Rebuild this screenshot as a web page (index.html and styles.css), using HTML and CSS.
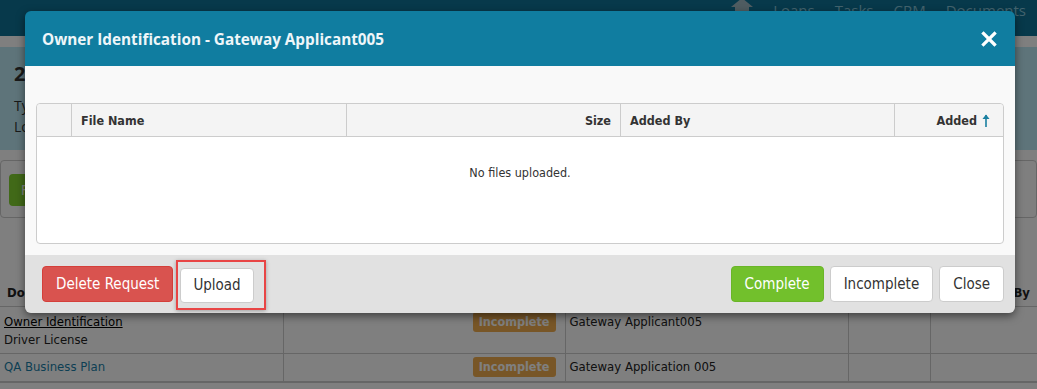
FILE: index.html
```html
<!DOCTYPE html>
<html lang="en">
<head>
    <meta charset="UTF-8">
    <meta name="viewport" content="width=device-width, initial-scale=1.0">
    <title>Owner Identification</title>
    <link rel="stylesheet" href="styles.css">
</head>
<body>

<div class="page">
    <div class="topnav">
        <svg class="home-icon" width="22" height="16" viewBox="0 0 22 16"><path d="M11 0 L22 9 L18 9 L18 16 L4 16 L4 9 L0 9 Z" fill="#9fb8c2"/></svg>
        <span>Loans</span>
        <span>Tasks</span>
        <span>CRM</span>
        <span>Documents</span>
    </div>
    <div class="strip"></div>
    <div class="summary">
        <div class="summary-title">2</div>
        <div class="summary-line">Type</div>
        <div class="summary-line">Loan</div>
    </div>
    <div class="actions-box">
        <button class="btn-green-bg">Request</button>
    </div>

    <table class="docs">
        <colgroup>
            <col style="width: 283px">
            <col style="width: 282px">
            <col style="width: 283px">
            <col style="width: 82px">
            <col>
        </colgroup>
        <thead>
            <tr>
                <th>Document</th>
                <th></th>
                <th></th>
                <th></th>
                <th class="right">Added By</th>
            </tr>
        </thead>
        <tbody>
            <tr class="tall">
                <td><a class="doc-link" href="#">Owner Identification</a><br>Driver License</td>
                <td class="right"><span class="badge">Incomplete</span></td>
                <td>Gateway Applicant005</td>
                <td></td>
                <td></td>
            </tr>
            <tr>
                <td><a class="doc-link blue" href="#">QA Business Plan</a></td>
                <td class="right"><span class="badge">Incomplete</span></td>
                <td>Gateway Application 005</td>
                <td></td>
                <td></td>
            </tr>
        </tbody>
    </table>
</div>

<div class="overlay"></div>

<div class="modal">
    <div class="modal-header">
        <h3>Owner Identification - Gateway Applicant005</h3>
        <svg class="close-x" width="16" height="16" viewBox="0 0 16 16"><path d="M2.5 2.5 L13.5 13.5 M13.5 2.5 L2.5 13.5" stroke="#fff" stroke-width="3.2" stroke-linecap="square"/></svg>
    </div>
    <div class="modal-body">
        <div class="files">
            <div class="files-head">
                <div class="col col-check"></div>
                <div class="col col-name">File Name</div>
                <div class="col col-size">Size</div>
                <div class="col col-by">Added By</div>
                <div class="col col-added">Added
                    <svg width="8" height="13" viewBox="0 0 8 13"><path d="M4 1 L4 13" stroke="#1a7fa0" stroke-width="1.6"/><path d="M0.5 5 L4 0.5 L7.5 5 Z" fill="#1a7fa0"/></svg>
                </div>
            </div>
            <div class="files-empty">No files uploaded.</div>
        </div>
    </div>
    <div class="modal-footer">
        <div class="footer-left">
            <button class="btn btn-red">Delete Request</button>
            <span class="highlight"><button class="btn btn-white">Upload</button></span>
        </div>
        <div class="footer-right">
            <button class="btn btn-green">Complete</button>
            <button class="btn btn-white">Incomplete</button>
            <button class="btn btn-white">Close</button>
        </div>
    </div>
</div>

</body>
</html>
```

FILE: styles.css
```css
body {
    margin: 0;
    padding: 0;
    font-family: "DejaVu Sans Condensed", "DejaVu Sans", sans-serif;
    font-size: 12px;
    color: #222;
    background-color: #fff;
    width: 1037px;
    height: 389px;
    overflow: hidden;
    position: relative;
}

.topnav {
    height: 36px;
    background-color: #0e7296;
    display: flex;
    justify-content: flex-end;
    align-items: flex-start;
    gap: 20px;
    padding-right: 11px;
    color: #86c6dc;
    font-family: "Open Sans", sans-serif;
    font-size: 15px;
    line-height: 20px;
}

.home-icon {
    margin-top: -2px;
}

.strip {
    height: 11px;
    background-color: #fff;
}

.summary {
    height: 103px;
    background-color: #bce9f5;
    padding: 14px 14px 0;
    box-sizing: border-box;
    font-family: "Open Sans", sans-serif;
    color: #333;
}

.summary-title {
    font-size: 20px;
    font-weight: bold;
    line-height: 26px;
    margin-bottom: 8px;
}

.summary-line {
    font-size: 14px;
    line-height: 21px;
}

.actions-box {
    margin: 10px 0 0;
    height: 58px;
    border: 1px solid #ccc;
    border-radius: 4px;
    padding: 13px 8px;
    box-sizing: border-box;
}

.btn-green-bg {
    height: 32px;
    padding: 0 12px;
    border: none;
    border-radius: 4px;
    background-color: #82d231;
    color: #fff;
    font-family: inherit;
    font-size: 14px;
}

.docs {
    margin-top: 60px;
    width: 1037px;
    border-collapse: collapse;
    table-layout: fixed;
    font-size: 13px;
}

.docs th {
    text-align: left;
    font-weight: bold;
    height: 28px;
    padding: 0 7px;
    border-bottom: 1px solid #ccc;
    white-space: nowrap;
}

.docs td {
    padding: 4px;
    vertical-align: top;
    line-height: 18px;
    border-left: 1px solid #ccc;
    border-bottom: 1px solid #ccc;
}

.docs td:first-child {
    border-left: none;
}

.docs tbody tr:last-child td {
    border-bottom: 2px solid #ccc;
}

.docs .tall td {
    height: 31px;
    padding-top: 6px;
}

.docs .right {
    text-align: right;
}

.docs td.right {
    padding-right: 9px;
}

.doc-link {
    color: #000;
}

.doc-link.blue {
    color: #1a7fa8;
    text-decoration: none;
}

.badge {
    display: inline-block;
    background-color: #f0ad4e;
    color: #fff;
    font-weight: bold;
    font-size: 12.5px;
    padding: 0 6px;
    border-radius: 3px;
    line-height: 20px;
    margin-top: -1px;
}

.overlay {
    position: absolute;
    left: 0;
    top: 0;
    right: 0;
    bottom: 0;
    background-color: rgba(0, 0, 0, 0.5);
}

.modal {
    position: absolute;
    left: 25px;
    top: 11px;
    width: 990px;
    border-radius: 6px;
    overflow: hidden;
    box-shadow: 0 3px 9px rgba(0, 0, 0, 0.5);
}

.modal-header {
    height: 55px;
    background-color: #107da0;
    display: flex;
    align-items: center;
    justify-content: space-between;
    padding: 0 18px 0 17px;
}

.modal-header h3 {
    margin: 0;
    color: #eef6f9;
    font-family: "Open Sans", sans-serif;
    font-size: 15.3px;
    font-weight: bold;
}

.modal-body {
    background-color: #f9f9f9;
    padding: 37px 11px 11px;
}

.files {
    background-color: #fff;
    border: 1px solid #ccc;
    border-radius: 4px;
    height: 139px;
}

.files-head {
    display: flex;
    height: 32px;
    background-color: #f4f4f4;
    border-bottom: 1px solid #ccc;
    border-radius: 4px 4px 0 0;
    font-weight: bold;
    color: #333;
    font-size: 12.5px;
}

.col {
    display: flex;
    align-items: center;
    padding: 0 9px;
    box-sizing: border-box;
    border-left: 1px solid #ccc;
}

.col-check { width: 34px; border-left: none; }
.col-name { width: 275px; }
.col-size { width: 274px; justify-content: flex-end; }
.col-by { width: 274px; }
.col-added { flex: 1; justify-content: flex-end; gap: 5px; padding-right: 13px; }

.files-empty {
    text-align: center;
    padding-top: 28px;
    color: #333;
    font-size: 12.5px;
}

.modal-footer {
    background-color: #e1e1e1;
    height: 58px;
    display: flex;
    justify-content: space-between;
    align-items: center;
    padding: 0 11px 0 17px;
}

.footer-left, .footer-right {
    display: flex;
    align-items: center;
    gap: 6px;
}

.footer-left {
    gap: 3px;
}

.btn {
    height: 36px;
    padding: 0 13px;
    border-radius: 4px;
    font-family: "DejaVu Sans Condensed", "DejaVu Sans", sans-serif;
    font-size: 15px;
    cursor: pointer;
}

.btn-red {
    background-color: #d9534f;
    border: 1px solid #d43f3a;
    color: #fff;
}

.btn-green {
    background-color: #72c02c;
    border: 1px solid #6ab528;
    color: #fff;
}

.btn-white {
    background-color: #fff;
    border: 1px solid #ccc;
    color: #333;
}

.highlight {
    display: inline-flex;
    padding: 6px 10px 5px 2px;
    border: 2px solid #e84545;
    box-shadow: 0 1px 4px rgba(0, 0, 0, 0.3);
    margin-top: 1px;
}

.highlight .btn {
    height: 35px;
    padding: 0 12px;
}
```
